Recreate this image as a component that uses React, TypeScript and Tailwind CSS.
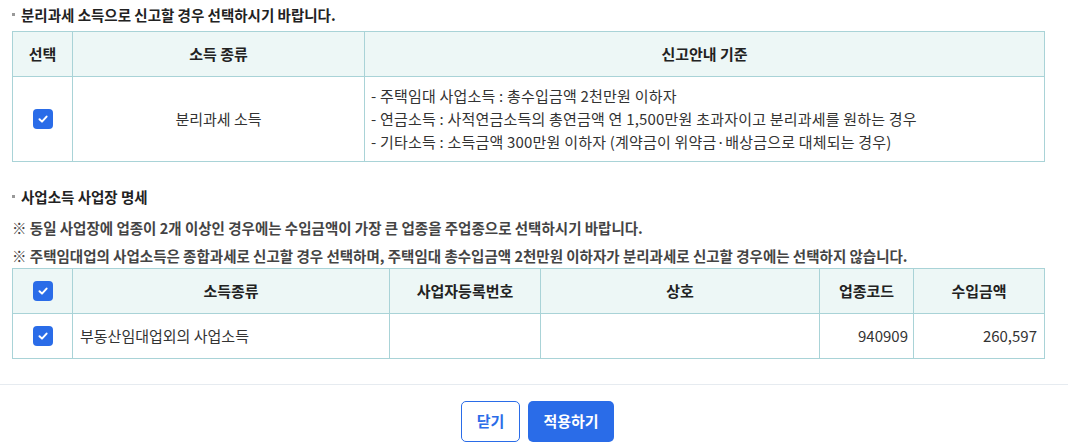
const font = { fontFamily: '"Noto Sans CJK KR", "Noto Sans", sans-serif' };

function CheckBox() {
  return (
    <span className="inline-flex h-[20px] w-[20px] items-center justify-center rounded-[4px] bg-[#2a6ce8]">
      <svg width="12" height="12" viewBox="0 0 12 12" fill="none">
        <path d="M2.5 6.2 5 8.6 9.6 3.6" stroke="white" strokeWidth="2" strokeLinecap="round" strokeLinejoin="round" />
      </svg>
    </span>
  );
}

function SectionTitle({ children }: { children: React.ReactNode }) {
  return (
    <div className="flex items-center gap-[6px] text-[14.5px] font-bold text-[#222]">
      <span className="h-[3px] w-[3px] bg-[#999]" />
      {children}
    </div>
  );
}

const th = 'border border-[#a9d3d7] bg-[#edf7f6] text-[15px] font-bold text-[#222]';
const td = 'border border-[#a9d3d7] text-[15px] text-[#333]';

export default function App() {
  return (
    <div className="min-h-screen bg-white" style={font}>
      <div className="pl-[12px] pr-[23px] pt-[4px]">
        <SectionTitle>분리과세 소득으로 신고할 경우 선택하시기 바랍니다.</SectionTitle>

        <table className="mt-[5px] w-full border-collapse">
          <colgroup>
            <col className="w-[60px]" />
            <col className="w-[292px]" />
            <col />
          </colgroup>
          <thead>
            <tr className="h-[45px]">
              <th className={th}>선택</th>
              <th className={th}>소득 종류</th>
              <th className={th}>신고안내 기준</th>
            </tr>
          </thead>
          <tbody>
            <tr className="h-[85px]">
              <td className={`${td} text-center`}>
                <div className="flex justify-center">
                  <CheckBox />
                </div>
              </td>
              <td className={`${td} text-center`}>분리과세 소득</td>
              <td className={`${td} px-[6px] leading-[23px] tracking-[0.2px]`}>
                <div>- 주택임대 사업소득 : 총수입금액 2천만원 이하자</div>
                <div>- 연금소득 : 사적연금소득의 총연금액 연 1,500만원 초과자이고 분리과세를 원하는 경우</div>
                <div>- 기타소득 : 소득금액 300만원 이하자 (계약금이 위약금·배상금으로 대체되는 경우)</div>
              </td>
            </tr>
          </tbody>
        </table>

        <div className="mt-[24px]">
          <SectionTitle>사업소득 사업장 명세</SectionTitle>
        </div>
        <div className="mt-[9px] flex flex-col gap-[7px] text-[14.5px] font-semibold text-[#444]">
          <div>※ 동일 사업장에 업종이 2개 이상인 경우에는 수입금액이 가장 큰 업종을 주업종으로 선택하시기 바랍니다.</div>
          <div>
            ※ 주택임대업의 사업소득은 종합과세로 신고할 경우 선택하며, 주택임대 총수입금액 2천만원 이하자가 분리과세로 신고할 경우에는 선택하지 않습니다.
          </div>
        </div>

        <table className="mt-[1px] w-full border-collapse">
          <colgroup>
            <col className="w-[60px]" />
            <col className="w-[317px]" />
            <col className="w-[151px]" />
            <col className="w-[279px]" />
            <col className="w-[94px]" />
            <col />
          </colgroup>
          <thead>
            <tr className="h-[45px]">
              <th className={th}>
                <div className="flex justify-center">
                  <CheckBox />
                </div>
              </th>
              <th className={th}>소득종류</th>
              <th className={th}>사업자등록번호</th>
              <th className={th}>상호</th>
              <th className={th}>업종코드</th>
              <th className={th}>수입금액</th>
            </tr>
          </thead>
          <tbody>
            <tr className="h-[45px]">
              <td className={td}>
                <div className="flex justify-center">
                  <CheckBox />
                </div>
              </td>
              <td className={`${td} px-[7px]`}>부동산임대업외의 사업소득</td>
              <td className={td} />
              <td className={td} />
              <td className={`${td} px-[5px] text-right`}>940909</td>
              <td className={`${td} px-[7px] text-right`}>260,597</td>
            </tr>
          </tbody>
        </table>
      </div>

      <div className="mt-[25px] border-t border-[#e6ebf0]" />

      <div className="mt-[16px] flex justify-center gap-[8px] pl-[7px]">
        <button className="h-[41px] w-[59px] rounded-[5px] border border-[#2a6ce8] bg-white text-[15px] font-bold text-[#2a6ce8]">
          닫기
        </button>
        <button className="h-[41px] w-[86px] rounded-[5px] bg-[#2a6ce8] text-[15px] font-bold text-white">
          적용하기
        </button>
      </div>
    </div>
  );
}
